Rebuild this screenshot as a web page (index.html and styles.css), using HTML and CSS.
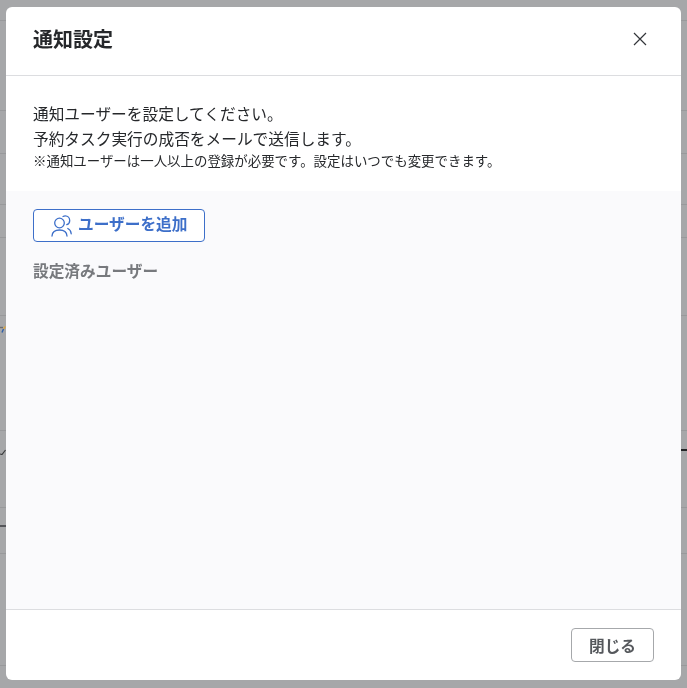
FILE: index.html
```html
<!DOCTYPE html>
<html lang="ja">
<head>
<meta charset="utf-8">
<title>通知設定</title>
<link rel="stylesheet" href="styles.css">
</head>
<body>
<div class="page" aria-hidden="true">
  <div class="row r1"></div>
  <div class="row r2"></div>
  <div class="row r3"></div>
  <div class="row r4"></div>
  <div class="row r5"></div>
  <div class="row r6"></div>
  <div class="row r7">
    <svg class="mark mark-color" width="6" height="7" viewBox="0 0 6 7" fill="none" stroke-width="1.400"><path d="M5.500 .5L3.500 3" stroke="#d9a441"/><path d="M3.500 3L2 6.500" stroke="#2f5fa8"/><path d="M0 1.500h3" stroke="#6b6c6e"/></svg>
    <svg class="mark mark-check" width="6" height="6" viewBox="0 0 6 6" fill="none" stroke="#3a3b3d" stroke-width="1.200"><path d="M0 5l2 .5L5.500 1"/></svg>
    <span class="mark mark-dash-right"></span>
  </div>
  <div class="row r8">
    <span class="mark mark-dash-left"></span>
  </div>
  <div class="row r9"></div>
  <div class="row r10"></div>
</div>
<div class="overlay">
  <div class="dialog" role="dialog">
    <header class="dialog-header">
      <h1 class="dialog-title">通知設定</h1>
      <button class="close" aria-label="閉じる">
        <svg width="14" height="14" viewBox="0 0 14 14" fill="none" stroke="#33363a" stroke-width="1.2"><path d="M1 1l12 12M13 1L1 13"/></svg>
      </button>
    </header>
    <section class="intro">
      <p class="intro-line">通知ユーザーを設定してください。</p>
      <p class="intro-line">予約タスク実行の成否をメールで送信します。</p>
      <p class="intro-note">※通知ユーザーは一人以上の登録が必要です。設定はいつでも変更できます。</p>
    </section>
    <section class="content">
      <button class="add-user">
        <svg class="add-icon" width="22" height="22" viewBox="0 0 22 22" fill="none" stroke="#3d6fc9" stroke-width="1.300" stroke-linecap="round">
          <circle cx="8.500" cy="8" r="4.800"/>
          <path d="M1 21c.3-4 3.300-6 7.500-6s7.200 2 7.500 6"/>
          <path d="M12 1.500c.7-.4 1.500-.6 2.300-.6 2.500 0 4.400 2 4.400 4.500 0 2-1.200 3.700-2.900 4.300"/>
          <path d="M16.800 13.500c2 .9 3.200 2.800 3.400 5.300"/>
        </svg>
        <span class="add-label">ユーザーを追加</span>
      </button>
      <h2 class="section-label">設定済みユーザー</h2>
    </section>
    <footer class="dialog-footer">
      <button class="close-btn">閉じる</button>
    </footer>
  </div>
</div>
</body>
</html>
```
FILE: styles.css
```css
* { box-sizing: border-box; }
html, body { margin: 0; height: 100%; overflow: hidden; }
body {
  background: #a6a7a9;
  font-family: "Roboto", "Noto Sans CJK JP", sans-serif;
  color: #26282b;
}
.page { display: flex; flex-direction: column; }
.row { border-bottom: 1px solid #98999b; flex: none; position: relative; }
.r1 { height: 21px; }
.r2 { height: 90px; }
.r3 { height: 43px; }
.r4 { height: 51px; }
.r5 { height: 33px; }
.r6 { height: 78px; }
.r7 { height: 115px; }
.r8 { height: 77px; }
.r9 { height: 46px; }
.r10 { height: 112px; }
.mark { position: absolute; display: block; }
.mark-color { left: 0; top: 10px; }
.mark-check { left: 0; top: 133px; }
.mark-dash-right { right: 0; top: 133px; width: 6px; height: 2px; background: #222325; }
.mark-dash-left { left: 0; top: 94px; width: 6px; height: 2px; background: #55565a; }

.overlay {
  position: fixed;
  inset: 0;
  padding: 7px 6px;
}
.dialog {
  height: 673px;
  background: #fff;
  border-radius: 6px;
  display: flex;
  flex-direction: column;
  overflow: hidden;
}
.dialog-header {
  height: 69px;
  flex: none;
  padding: 0 34px 2px 27px;
  display: flex;
  align-items: center;
  justify-content: space-between;
  border-bottom: 1px solid #dcdde0;
}
.dialog-title {
  margin: 0;
  font-size: 20px;
  font-weight: 700;
  line-height: 30px;
}
.close {
  width: 14px;
  height: 14px;
  margin-top: -3px;
  padding: 0;
  border: 0;
  background: none;
  display: flex;
}
.intro {
  flex: none;
  height: 115px;
  padding: 25px 27px 0;
}
.intro-line {
  margin: 0;
  font-size: 15.700px;
  line-height: 26px;
}
.intro-line:first-child { padding-top: 1px; margin-bottom: -1px; }
.intro-note {
  margin: 1px 0 0;
  font-size: 13.450px;
  line-height: 16px;
}
.content {
  flex: 1;
  background: #fafafc;
  padding: 18px 27px 0;
}
.add-user {
  width: 172px;
  height: 33px;
  padding: 0 0 0 17px;
  display: flex;
  align-items: center;
  gap: 5px;
  background: #fff;
  border: 1px solid #3d6fc9;
  border-radius: 4px;
  color: #3d6fc9;
  font: 700 15.700px "Roboto", "Noto Sans CJK JP", sans-serif;
}
.add-label { margin-top: -4px; }
.section-label {
  margin: 18px 0 0;
  font-size: 15.700px;
  font-weight: 700;
  line-height: 24px;
  color: #77797d;
}
.dialog-footer {
  flex: none;
  height: 71px;
  border-top: 1px solid #dcdde0;
  padding: 18px 27px 0 0;
  display: flex;
  justify-content: flex-end;
  align-items: flex-start;
}
.close-btn {
  width: 83px;
  height: 34px;
  background: #fff;
  border: 1px solid #a6a8ab;
  border-radius: 4px;
  color: #55585c;
  font: 700 15.700px "Roboto", "Noto Sans CJK JP", sans-serif;
}
```
